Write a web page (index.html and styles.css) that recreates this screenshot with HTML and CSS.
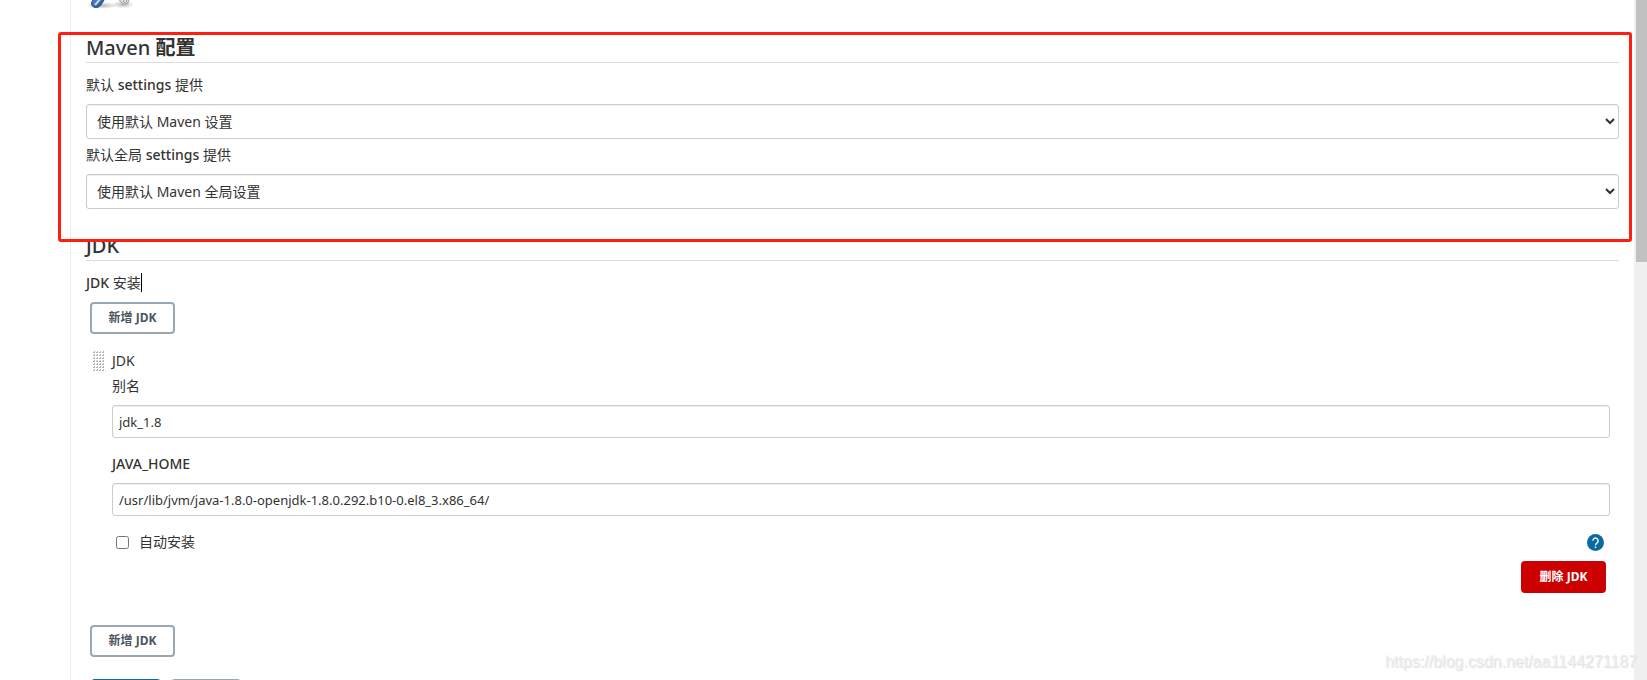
FILE: index.html
```html
<!DOCTYPE html>
<html lang="zh-CN">
<head>
<meta charset="utf-8">
<title>Maven 配置</title>
<link rel="stylesheet" href="styles.css">
</head>
<body>
<div class="page">
  <main class="main">
    <header class="page-header">
      <svg class="tools" width="48" height="10" viewBox="0 0 48 10" aria-hidden="true">
        <defs>
          <linearGradient id="handle" x1="0" y1="0" x2="1" y2="1"><stop offset="0" stop-color="#5b8fce"/><stop offset="1" stop-color="#204a87"/></linearGradient>
          <radialGradient id="shade"><stop offset="0" stop-color="#888" stop-opacity=".6"/><stop offset="1" stop-color="#888" stop-opacity="0"/></radialGradient>
        </defs>
        <ellipse cx="16" cy="5.500" rx="16" ry="3.500" fill="url(#shade)"/>
        <ellipse cx="37" cy="4.500" rx="11" ry="4" fill="url(#shade)"/>
        <path d="M9 -3 5.500 2.500Q5 6 8 7.200 12 8.500 14.500 5.500L20 -3Z" fill="url(#handle)" stroke="#204a87"/>
        <path d="M15 -2 9 5" stroke="#c3d8f2" stroke-width="2"/>
        <path d="M31 -3 35.500 2.500Q38.500 5.500 41.500 3.500 44 1 41.500 -3Z" fill="#e1e1df" stroke="#999"/>
        <circle cx="39" cy="1" r="1.500" fill="#fff" stroke="#999"/>
      </svg>
    </header>

    <section class="section">
      <h2 class="section-title"><span class="latin">Maven</span> 配置</h2>
      <label class="label" for="settings">默认 <span class="latin">settings</span> 提供</label>
      <select class="select" id="settings"><option>使用默认 Maven 设置</option></select>
      <label class="label label-next" for="global-settings">默认全局 <span class="latin">settings</span> 提供</label>
      <select class="select" id="global-settings"><option>使用默认 Maven 全局设置</option></select>
      <div class="highlight"></div>
    </section>

    <section class="section">
      <h2 class="section-title"><span class="latin">JDK</span></h2>
      <div class="label"><span class="caret"><span class="latin">JDK</span> 安装</span></div>
      <button class="button add" type="button">新增 JDK</button>
      <div class="item">
        <svg class="grip" width="12" height="21" aria-hidden="true">
          <defs><pattern id="dots" width="3" height="3" patternUnits="userSpaceOnUse"><path d="M1 0h1v2H0V1h1z" fill="#b4b4b0"/></pattern></defs>
          <rect width="12" height="21" fill="url(#dots)"/>
        </svg>
        <div class="item-body">
          <div class="item-title">JDK</div>
          <label class="label" for="name">别名</label>
          <input class="input" id="name" type="text" value="jdk_1.8">
          <label class="label home-label" for="home"><span class="latin">JAVA_HOME</span></label>
          <input class="input" id="home" type="text" value="/usr/lib/jvm/java-1.8.0-openjdk-1.8.0.292.b10-0.el8_3.x86_64/">
          <div class="check-row">
            <input class="check" id="auto" type="checkbox">
            <label for="auto">自动安装</label>
            <button class="help" type="button" aria-label="帮助">
              <svg width="17" height="17" viewBox="0 0 24 24" aria-hidden="true"><circle cx="12" cy="12" r="12" fill="#0b6aa2"/><path d="M8.300 9.500a3.700 3.700 0 1 1 6.200 2.700C13 13.500 12 14 12 16" fill="none" stroke="#fff" stroke-width="2"/><rect x="11" y="17.500" width="2" height="2.300" fill="#fff"/></svg>
            </button>
          </div>
          <div class="delete-row"><button class="button danger" type="button">删除 JDK</button></div>
        </div>
      </div>
      <button class="button add" type="button">新增 JDK</button>
    </section>

    <footer class="footer">
      <button class="button primary" type="button" aria-label="保存"></button>
      <button class="button" type="button" aria-label="应用"></button>
    </footer>
  </main>
  <div class="scrollbar"><div class="thumb"></div></div>
  <div class="watermark">https://blog.csdn.net/aa1144271187</div>
</div>
</body>
</html>
```
FILE: styles.css
```css
* { box-sizing: border-box; }
body {
  margin: 0;
  background: #fff;
  color: #333;
  font: 14px/20px "Noto Sans", "Noto Sans CJK SC", sans-serif;
}
.page {
  position: relative;
  display: flex;
  height: 100vh;
  padding-left: 70px;
  overflow: hidden;
}
.main {
  flex: 1;
  min-width: 0;
  padding: 0 15px;
  border-left: 1px solid #e6edf3;
}
.page-header { height: 34px; }
.tools { display: block; }
.section { position: relative; margin-bottom: 23px; }
.section-title {
  height: 29px;
  margin: 0 0 12px;
  border-bottom: 1px solid #ddd;
  font-size: 20px;
  line-height: 28px;
  font-weight: 700;
}
.latin { font-weight: 500; }
.label {
  display: block;
  margin-bottom: 9px;
}
.label-next { margin-top: 6px; }
.select {
  display: block;
  width: 100%;
  height: 35px;
  padding: 0 6px;
  border: 1px solid #ccc;
  border-radius: 3px;
  background: #fff;
  box-shadow: inset 0 1px 1px rgba(0, 0, 0, .07);
  color: #333;
  font: inherit;
}
.highlight {
  position: absolute;
  inset: -2px -13px -33px -28px;
  border: 3px solid #ff1e10;
  border-radius: 3px;
  pointer-events: none;
  z-index: 1;
}
.caret { border-right: 1px solid #000; }
.button {
  height: 32px;
  min-width: 85px;
  padding: 0 15px;
  border: 2px solid #98a7b1;
  border-radius: 4px;
  background: #fff;
  color: #4d545d;
  font: 700 12px/20px "Noto Sans", "Noto Sans CJK SC", sans-serif;
}
.add { display: block; margin-left: 4px; }
.item {
  display: flex;
  gap: 7px;
  margin: 17px 9px 32px 7px;
}
.item-body { flex: 1; min-width: 0; }
.item-title { margin-bottom: 5px; }
.input {
  display: block;
  width: 100%;
  height: 33px;
  padding: 0 6px;
  border: 1px solid #ccc;
  border-radius: 3px;
  box-shadow: inset 0 1px 1px rgba(0, 0, 0, .07);
  color: #333;
  font: inherit;
  font-size: 13px;
}
.home-label { margin-top: 16px; }
.check-row {
  display: flex;
  align-items: center;
  height: 20px;
  margin: 16px 6px 9px 4px;
}
.check { width: 13px; height: 13px; margin: 0 10px 0 0; }
.help {
  display: flex;
  margin-left: auto;
  padding: 0;
  border: 0;
  background: none;
}
.delete-row { display: flex; justify-content: flex-end; margin-right: 4px; }
.danger { border-color: #c00; background: #c00; color: #fff; }
.footer { display: flex; gap: 10px; margin: -1px 5px; }
.footer .button { min-width: 70px; }
.footer .primary { border-color: #0b6aa2; background: #0b6aa2; color: #fff; }
.scrollbar {
  width: 13px;
  padding-left: 2px;
  background: #f0f0f0;
}
.thumb { height: 262px; background: #c1c1c1; }
.watermark {
  position: absolute;
  right: 10px;
  bottom: 8px;
  color: #eee;
  font: 16px/20px "Liberation Sans", sans-serif;
  text-shadow: 1px 1px 1px #ddd;
}
```
